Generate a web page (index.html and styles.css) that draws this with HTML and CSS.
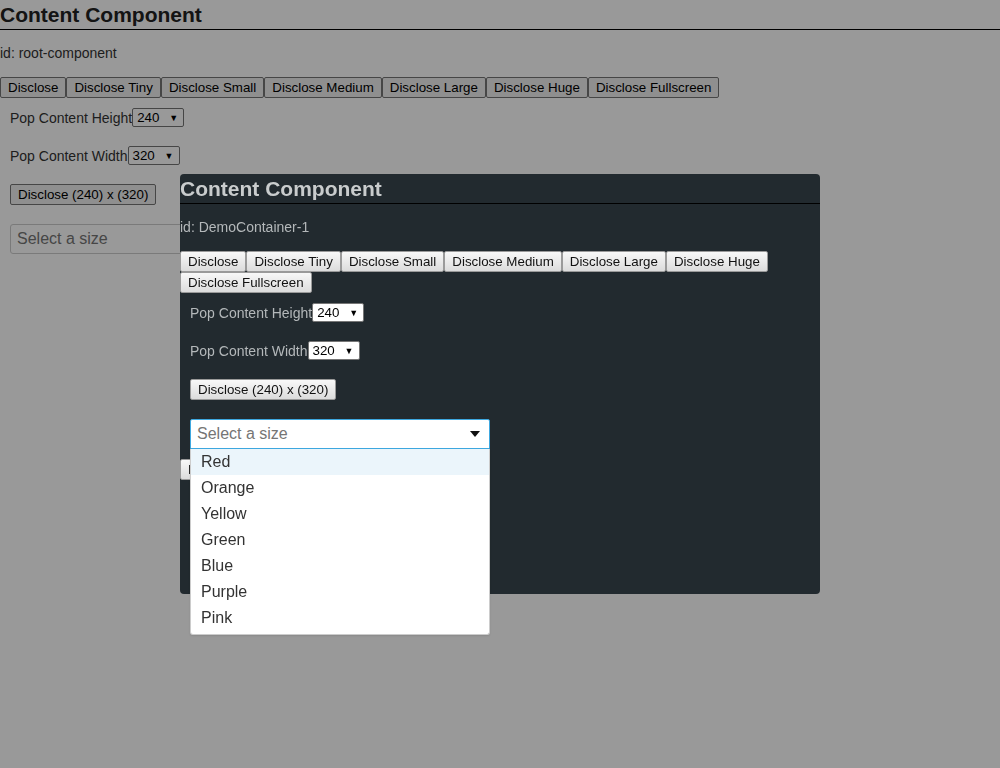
FILE: index.html
```html
<!DOCTYPE html>
<html>
<head>
<meta charset="utf-8">
<link rel="stylesheet" href="styles.css">
</head>
<body>
<div class="component root">
  <h1 class="title">Content Component</h1>
  <p class="ident">id: root-component</p>
  <div class="btn-row">
    <button class="btn">Disclose</button><button class="btn">Disclose Tiny</button><button class="btn">Disclose Small</button><button class="btn">Disclose Medium</button><button class="btn">Disclose Large</button><button class="btn">Disclose Huge</button><button class="btn">Disclose Fullscreen</button>
  </div>
  <div class="controls">
    <div class="field"><span>Pop Content Height</span><span class="sel">240<i>▼</i></span></div>
    <div class="field"><span>Pop Content Width</span><span class="sel">320<i>▼</i></span></div>
    <div class="field"><button class="btn">Disclose (240) x (320)</button></div>
    <div class="combo"><span class="ph">Select a size</span></div>
  </div>
</div>
<div class="overlay"></div>
<div class="popup">
  <div class="component inner">
    <h1 class="title">Content Component</h1>
    <p class="ident">id: DemoContainer-1</p>
    <div class="btn-row">
      <button class="btn">Disclose</button><button class="btn">Disclose Tiny</button><button class="btn">Disclose Small</button><button class="btn">Disclose Medium</button><button class="btn">Disclose Large</button><button class="btn">Disclose Huge</button><button class="btn">Disclose Fullscreen</button>
    </div>
    <div class="controls">
      <div class="field"><span>Pop Content Height</span><span class="sel">240<i>▼</i></span></div>
      <div class="field"><span>Pop Content Width</span><span class="sel">320<i>▼</i></span></div>
      <div class="field"><button class="btn">Disclose (240) x (320)</button></div>
      <div class="combo-wrap">
        <div class="combo focus"><span class="ph">Select a size</span><svg class="caret" width="10" height="6" viewBox="0 0 10 6"><path d="M0 0h10L5 6z" fill="#111"/></svg></div>
        <ul class="menu">
          <li class="hl">Red</li>
          <li>Orange</li>
          <li>Yellow</li>
          <li>Green</li>
          <li>Blue</li>
          <li>Purple</li>
          <li>Pink</li>
        </ul>
      </div>
    </div>
    <div class="after"><button class="btn">Disclose</button></div>
  </div>
</div>
</body>
</html>
```
FILE: styles.css
```css
html, body {
  margin: 0;
  padding: 0;
  background: #fff;
  font-family: "Liberation Sans", Arial, sans-serif;
  color: #222;
}
.component {
  display: flex;
  flex-direction: column;
}
.title {
  margin: 0;
  font-size: 21px;
  font-weight: bold;
  line-height: 29px;
  height: 29px;
  border-bottom: 1px solid #000;
  color: #222;
}
.ident {
  margin: 0;
  padding-top: 15px;
  font-size: 14px;
  line-height: 17px;
  color: #333;
}
.btn-row {
  display: flex;
  flex-wrap: wrap;
  margin-top: 15px;
}
.btn {
  font-family: "Liberation Sans", Arial, sans-serif;
  font-size: 13.33px;
  line-height: 15px;
  height: 21px;
  padding: 2px 7px;
  margin: 0;
  border: 1px solid #767676;
  border-radius: 2px;
  background: #efefef;
  color: #000;
}
.controls {
  display: flex;
  flex-direction: column;
  align-items: flex-start;
  gap: 19px;
  padding-top: 10px;
  padding-left: 10px;
}
.field {
  display: flex;
  align-items: center;
  min-height: 19px;
  font-size: 14px;
  color: #333;
}
.sel {
  display: flex;
  align-items: center;
  justify-content: space-between;
  box-sizing: border-box;
  width: 52px;
  height: 19px;
  padding: 0 5px 0 4px;
  border: 1px solid #767676;
  border-radius: 2px;
  background: #fff;
  font-size: 13.33px;
  color: #000;
}
.sel i {
  font-style: normal;
  font-size: 9px;
}
.combo {
  box-sizing: border-box;
  width: 300px;
  height: 30px;
  display: flex;
  align-items: center;
  justify-content: space-between;
  padding: 0 9px 0 6px;
  border: 1px solid #ccc;
  border-radius: 3px;
  background: #fff;
}
.combo.focus { border-color: #3ea8e0; border-radius: 2px 2px 0 0; }
.ph {
  font-size: 16px;
  color: #757575;
}
.overlay {
  position: fixed;
  inset: 0;
  background: rgba(0, 0, 0, 0.4);
}
.popup {
  position: absolute;
  left: 180px;
  top: 174px;
  width: 640px;
  height: 420px;
  background: #222a2f;
  border-radius: 4px;
}
.inner .title { color: #c9cccd; }
.inner .ident { color: #b4b8ba; }
.inner .field { color: #b4b8ba; }
.inner .btn {
  background: linear-gradient(#f8f8f8, #dcdcdc);
  border-color: #9a9a9a;
  color: #111;
}
.combo-wrap {
  position: relative;
  width: 300px;
}
.menu {
  position: absolute;
  z-index: 2;
  left: 0;
  top: 30px;
  width: 300px;
  box-sizing: border-box;
  margin: 0;
  padding: 0 0 3px;
  list-style: none;
  background: #fff;
  border: 1px solid #ccc;
  border-top: none;
  border-radius: 0 0 3px 3px;
  box-shadow: 0 1px 2px rgba(0,0,0,0.1);
}
.menu li {
  height: 26px;
  line-height: 26px;
  padding-left: 10px;
  font-size: 16px;
  color: #333;
}
.menu li.hl { background: #ebf5fb; }
.after {
  margin-top: 10px;
}
```
